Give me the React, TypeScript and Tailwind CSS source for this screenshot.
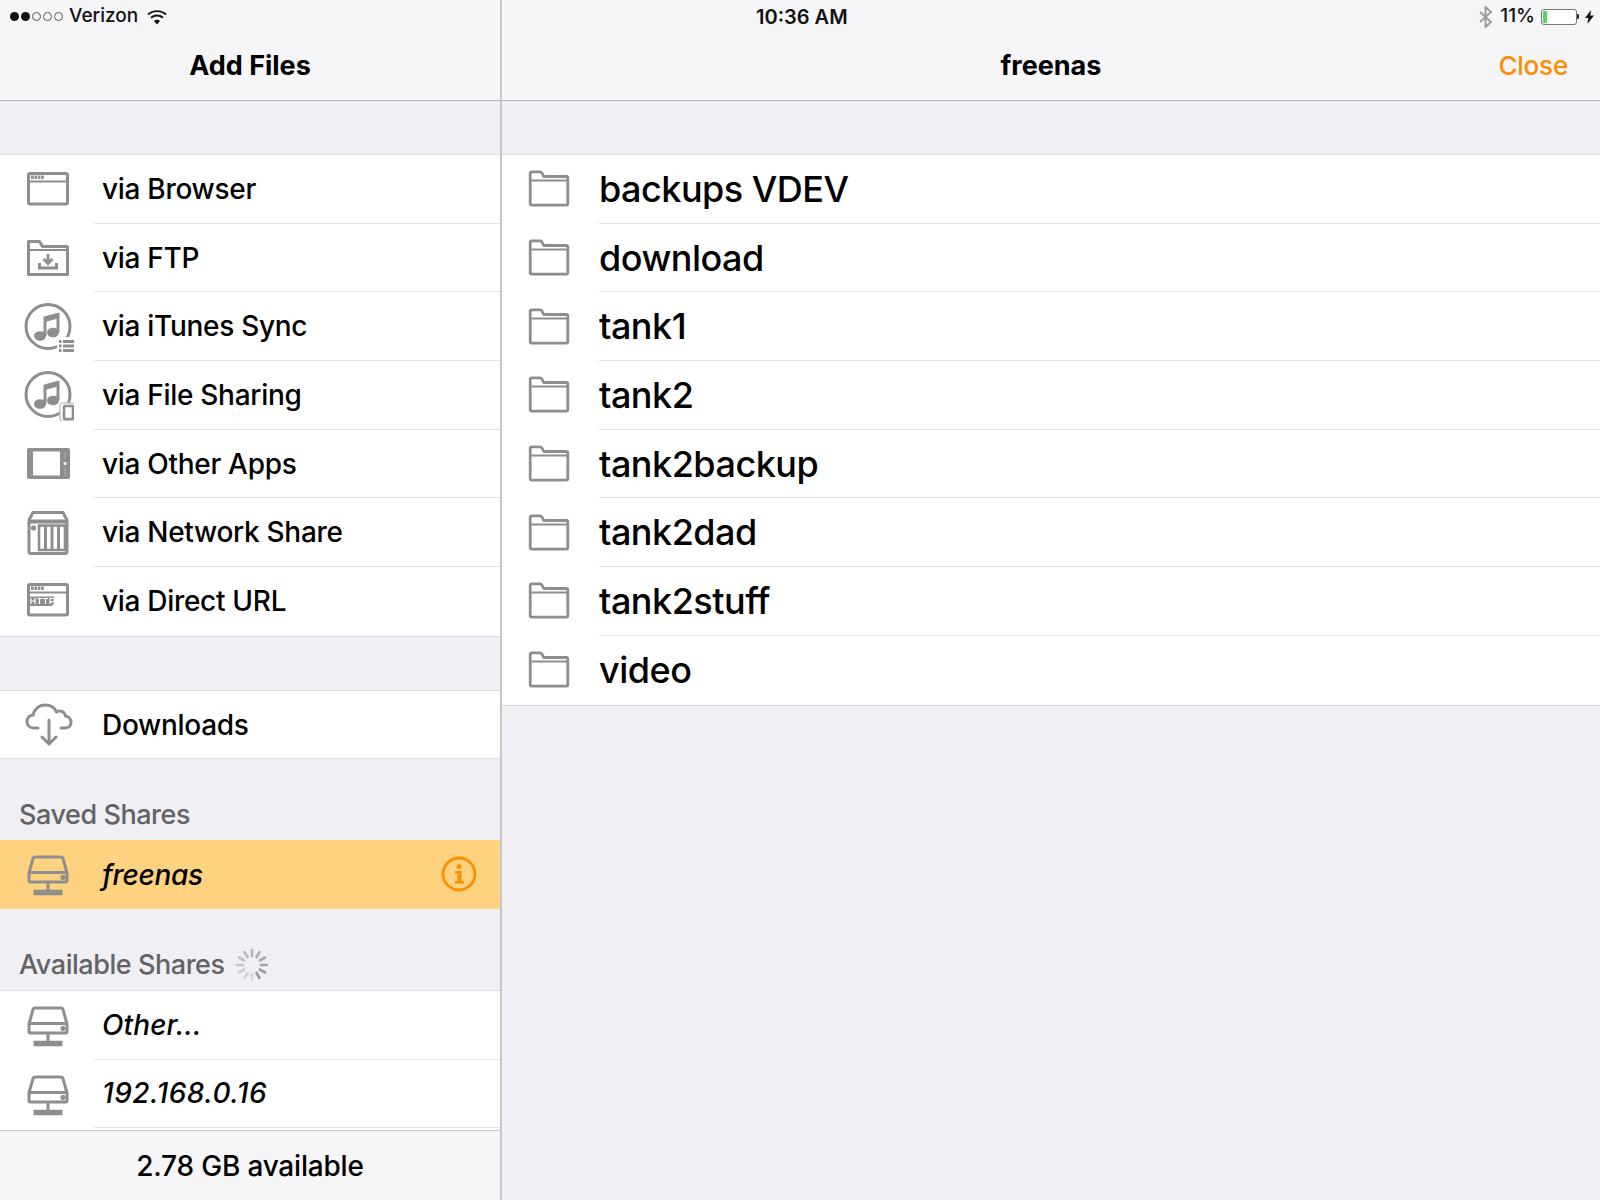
import React from "react";

const font = "font-['Inter','Liberation_Sans',sans-serif]";

const BrowserIcon = () => (
  <svg width="52" height="52" viewBox="0 0 52 52" fill="none" stroke="#8e8e8e" strokeWidth="3">
    <rect x="6.5" y="10.5" width="39" height="30.5" rx="1.5" />
    <path d="M6 18.5h40" strokeWidth="2.2" />
    <path d="M9 14.3h13" strokeWidth="3.4" strokeDasharray="2.6 .8" />
  </svg>
);

const FtpIcon = () => (
  <svg width="52" height="52" viewBox="0 0 52 52" fill="none" stroke="#8e8e8e" strokeWidth="3">
    <path d="M6.5 42.5V9.5h11l3 5h24a1 1 0 0 1 1 1v27H6.5z" strokeLinejoin="round" />
    <path d="M6 18h40" strokeWidth="2.2" />
    <path d="M26 22v9M21.5 27l4.5 4.5 4.5-4.5" strokeWidth="3" />
    <path d="M17.5 31v5h17v-5" strokeWidth="3" />
  </svg>
);

const Note = () => (
  <g>
    <path d="M23 35V17l13-3.5V31" fill="none" stroke="#8e8e8e" strokeWidth="3" />
    <ellipse cx="18" cy="35" rx="6" ry="4.8" fill="#8e8e8e" />
    <ellipse cx="31" cy="31.5" rx="6" ry="4.8" fill="#8e8e8e" />
    <path d="M23 15.5l13-3.5v5.5l-13 3.5z" fill="#8e8e8e" />
  </g>
);

const ItunesIcon = () => (
  <svg width="52" height="52" viewBox="0 0 52 52" fill="none">
    <circle cx="26" cy="25.5" r="22" stroke="#8e8e8e" strokeWidth="3" />
    <Note />
    <rect x="35" y="36" width="18" height="16" fill="#fff" />
    <path d="M41 40.5h12M41 45h12M41 49.5h12" stroke="#8e8e8e" strokeWidth="3" />
    <path d="M37 40.5h2.5M37 45h2.5M37 49.5h2.5" stroke="#8e8e8e" strokeWidth="3" />
  </svg>
);

const SharingIcon = () => (
  <svg width="52" height="52" viewBox="0 0 52 52" fill="none">
    <circle cx="26" cy="25.5" r="22" stroke="#8e8e8e" strokeWidth="3" />
    <Note />
    <rect x="38" y="34" width="15" height="18" rx="3" fill="#fff" stroke="#c4c4c4" strokeWidth="1.5" />
    <rect x="42" y="37" width="9" height="13" rx="1" fill="#fff" stroke="#8e8e8e" strokeWidth="2.6" />
  </svg>
);

const TabletIcon = () => (
  <svg width="52" height="52" viewBox="0 0 52 52" fill="none">
    <rect x="5" y="10" width="43" height="31" rx="2" fill="#8e8e8e" />
    <rect x="11" y="13.5" width="27" height="24" fill="#fff" />
    <circle cx="43" cy="25.5" r="1.5" fill="#fff" />
    <rect x="42.3" y="13.5" width="1.4" height="8" fill="#a5a5a5" />
    <rect x="42.3" y="29.5" width="1.4" height="8" fill="#a5a5a5" />
  </svg>
);

const NasIcon = () => (
  <svg width="52" height="52" viewBox="0 2 52 52" fill="none" stroke="#8e8e8e">
    <path d="M7 47V15l4-7.5h30l4 7.5v32a1.5 1.5 0 0 1-1.5 1.5h-35A1.5 1.5 0 0 1 7 47z" strokeWidth="3" />
    <path d="M6 16.5h40" strokeWidth="4" />
    <path d="M17 20.5h26v24.5H17z" strokeWidth="2.6" />
    <path d="M23.5 20v25M30 20v25M36.5 20v25" strokeWidth="3" />
    <circle cx="11.5" cy="23" r="2.2" fill="#8e8e8e" strokeWidth="1" />
  </svg>
);

const UrlIcon = () => (
  <svg width="52" height="52" viewBox="0 0 52 52" fill="none" stroke="#8e8e8e" strokeWidth="3">
    <rect x="6.5" y="9.5" width="39" height="30.5" rx="1.5" />
    <path d="M6 17.5h40" strokeWidth="2.2" />
    <path d="M9 13.3h13" strokeWidth="3.4" strokeDasharray="2.6 .8" />
    <path d="M6 21.5h26v7l-2 2.5H6" strokeWidth="0" fill="#8e8e8e" />
    <path d="M9 23v6M13 23v6M9 26h4M15 23.5h5M17.5 23.5V29M21 23.5h5M23.5 23.5V29M28 29v-5.5h2.6a1.6 1.6 0 0 1 0 3.4H28" stroke="#fff" strokeWidth="1.2" />
  </svg>
);

const CloudIcon = () => (
  <svg width="52" height="52" viewBox="-1 2 52 52" fill="none" stroke="#8e8e8e" strokeWidth="3" strokeLinecap="round">
    <path d="M15 32h-4.5C6.5 32 4 29 4 25.5c0-3.6 2.6-6.3 6.2-6.6C11 13.2 16 9 22.5 9c5 0 9 2.7 11 6.8 1-.5 2-.7 3-.7 3.2 0 5.4 2.2 6 5 3.3.5 5.5 3.2 5.5 6.2 0 3.5-2.6 5.7-6 5.7H38" />
    <path d="M26 24v24M19 41l7 7 7-7" strokeLinejoin="round" />
  </svg>
);

const DriveIcon = () => (
  <svg width="52" height="52" viewBox="0 0 52 52" fill="none" stroke="#8e8e8e">
    <path d="M7 25l4-14.5c.4-1 1-1.5 2-1.5h26c1 0 1.6.5 2 1.5l4 14.5v7.5a1.5 1.5 0 0 1-1.5 1.5h-35A1.5 1.5 0 0 1 7 32.5z" strokeWidth="3" />
    <path d="M6 24.5h40" strokeWidth="3" />
    <circle cx="41" cy="29.5" r="2.2" fill="#8e8e8e" strokeWidth="1" />
    <path d="M26 35v7" strokeWidth="3" />
    <path d="M11.5 44.5h29" strokeWidth="5.5" />
  </svg>
);

const FolderIcon = () => (
  <svg width="44" height="40" viewBox="0 1 44 40" fill="none" stroke="#8e8e8e" strokeWidth="2.8" strokeLinejoin="round">
    <path d="M3.2 35.5V5.5c0-1 .6-1.6 1.6-1.6h8.4c.8 0 1.2.4 1.6 1l2 3.6h22.4c1 0 1.6.6 1.6 1.6v25.4c0 1-.6 1.6-1.6 1.6H4.8c-1 0-1.6-.6-1.6-1.6z" />
    <path d="M3 12.5h37.8" strokeWidth="2" />
  </svg>
);

const Spinner = () => (
  <svg width="34" height="34" viewBox="-17 -17 34 34">
    {[...Array(12)].map((_, i) => (
      <line
        key={i}
        x1="0"
        y1="-9"
        x2="0"
        y2="-15"
        stroke="#8e8e93"
        strokeWidth="2.6"
        strokeLinecap="round"
        opacity={0.25 + (((i + 6) % 12) / 12) * 0.7}
        transform={`rotate(${i * 30})`}
      />
    ))}
  </svg>
);

const InfoIcon = () => (
  <svg width="36" height="36" viewBox="0 0 36 36" fill="none">
    <circle cx="18" cy="18" r="16" stroke="#ff8f00" strokeWidth="2.8" />
    <circle cx="18" cy="10.5" r="2.5" fill="#ff8f00" />
    <path d="M14 15h6.5v10h2.5v2.5h-9V25h2.5v-7.5H14z" fill="#ff8f00" />
  </svg>
);

const WifiIcon = () => (
  <svg width="20" height="16" viewBox="0 0 20 16" fill="none" stroke="#111" strokeWidth="1.9">
    <path d="M1 5.5C6 1 14 1 19 5.5" />
    <path d="M4 8.8c3.5-3 8.5-3 12 0" />
    <path d="M10 15.5l-3-3.6c1.8-1.4 4.2-1.4 6 0z" fill="#111" stroke="none" />
  </svg>
);

const BluetoothIcon = () => (
  <svg width="14" height="22" viewBox="0 0 14 22" fill="none" stroke="#9a9a9a" strokeWidth="1.9">
    <path d="M1 6l11 10-5.5 5V1L12 6 1 16" />
  </svg>
);

const Battery = () => (
  <div className="flex items-center">
    <div className="flex h-[16px] w-[36px] rounded-[3px] border border-[#777] bg-white p-[1px]">
      <div className="h-full w-[4px] rounded-[1px] bg-[#4cd964]" />
    </div>
    <div className="h-[5px] w-[2px] rounded-r-[1px] bg-[#333]" />
  </div>
);

const BoltIcon = () => (
  <svg width="9" height="14" viewBox="0 0 9 14">
    <path d="M6 0L0 8h3.4L2.4 14 9 5.6H5.2z" fill="#111" />
  </svg>
);

const topRows: [React.ReactNode, string][] = [
  [<BrowserIcon />, "via Browser"],
  [<FtpIcon />, "via FTP"],
  [<ItunesIcon />, "via iTunes Sync"],
  [<SharingIcon />, "via File Sharing"],
  [<TabletIcon />, "via Other Apps"],
  [<NasIcon />, "via Network Share"],
  [<UrlIcon />, "via Direct URL"],
];

const folders = ["backups VDEV", "download", "tank1", "tank2", "tank2backup", "tank2dad", "tank2stuff", "video"];

type RowProps = {
  icon: React.ReactNode;
  label: string;
  last?: boolean;
  italic?: boolean;
  short?: boolean;
  tracking?: string;
};

const MenuRow: React.FC<RowProps> = ({ icon, label, last, italic, short, tracking = "tracking-[-0.3px]" }) => (
  <div className={`flex bg-white ${short ? "h-[67px]" : "h-[68.7px]"}`}>
    <div className="flex w-[94px] items-center justify-center pl-[2px]">{icon}</div>
    <div
      className={`flex flex-1 items-center pl-2 text-[28px] font-medium text-black ${tracking} ${
        italic ? "italic" : ""
      } ${short ? "pt-[1px]" : ""} ${last ? "" : "border-b border-[#e2e2e5]"}`}
    >
      {label}
    </div>
  </div>
);

const App: React.FC = () => {
  return (
    <div className={`flex h-[1200px] w-[1600px] overflow-hidden bg-[#efeff4] ${font}`}>
      {/* left pane */}
      <div className="flex w-[502px] flex-col border-r-2 border-[#c8c8cc]">
        <div className="h-[101px] border-b border-[#b2b2b6] bg-[#f6f6f8]">
          <div className="flex h-[32px] items-center pl-[10px] pt-[1px] text-[19px] font-medium text-[#111]">
            <div className="flex gap-[2px]">
              <span className="h-[9px] w-[9px] rounded-full bg-[#111]" />
              <span className="h-[9px] w-[9px] rounded-full bg-[#111]" />
              <span className="h-[9px] w-[9px] rounded-full border border-[#555]" />
              <span className="h-[9px] w-[9px] rounded-full border border-[#555]" />
              <span className="h-[9px] w-[9px] rounded-full border border-[#555]" />
            </div>
            <span className="ml-[6px]">Verizon</span>
            <span className="ml-[9px]">
              <WifiIcon />
            </span>
          </div>
          <div className="flex h-[68px] items-center justify-center text-[27px] font-bold text-black">
            Add Files
          </div>
        </div>

        <div className="h-[54px] border-b border-[#dedee2]" />
        {topRows.map(([icon, label], i) => (
          <MenuRow key={label} icon={icon} label={label} last={i === topRows.length - 1} />
        ))}

        <div className="h-[55px] border-y border-[#dadade]" />
        <MenuRow icon={<CloudIcon />} label="Downloads" last short />

        <div className="flex h-[82px] items-end border-t border-[#e2e2e5] pb-[4px] pl-[19px] text-[27px] font-medium tracking-[-0.45px] text-[#636366]">
          Saved Shares
        </div>
        <div className="flex h-[69px] items-center bg-[#ffd27f]">
          <div className="flex w-[94px] items-center justify-center pl-[2px]">
            <DriveIcon />
          </div>
          <div className="flex-1 pl-2 pt-[1px] text-[28px] font-medium italic tracking-[-0.3px] text-black">freenas</div>
          <div className="pr-[23px]">
            <InfoIcon />
          </div>
        </div>

        <div className="flex h-[82px] items-end gap-[10px] border-b border-[#dedee2] pl-[19px] text-[27px] font-medium tracking-[-0.45px] text-[#636366]">
          <span className="pb-[4px]">Available Shares</span>
          <span className="pb-[8px]">
            <Spinner />
          </span>
        </div>
        <MenuRow icon={<DriveIcon />} label="Other..." italic tracking="tracking-[0.1px]" />
        <MenuRow icon={<DriveIcon />} label="192.168.0.16" italic tracking="tracking-[0.5px]" />
        <div className="h-[2px] bg-white" />

        <div className="flex flex-1 items-center justify-center border-t border-[#c8c8cc] bg-[#f6f6f8] text-[28px] font-medium tracking-[-0.2px] text-black">
          2.78 GB available
        </div>
      </div>

      {/* right pane */}
      <div className="flex flex-1 flex-col">
        <div className="h-[101px] border-b border-[#b2b2b6] bg-[#f6f6f8]">
          <div className="flex h-[32px] items-center pl-[254px] pr-[6px] pt-[1px] text-[19px] font-medium text-[#111]">
            <span className="text-[20px] font-semibold">10:36 AM</span>
            <div className="ml-auto flex items-center gap-[6px]">
              <span className="mr-[1px]">
                <BluetoothIcon />
              </span>
              <span>11%</span>
              <Battery />
              <BoltIcon />
            </div>
          </div>
          <div className="relative flex h-[68px] items-center justify-center text-[27px] font-bold text-black">
            freenas
            <span className="absolute right-[32px] mb-[2px] text-[26px] font-medium tracking-[-0.2px] text-[#ff8b00]">Close</span>
          </div>
        </div>

        <div className="h-[54px] border-b border-[#dedee2]" />
        {folders.map((name, i) => (
          <div key={name} className="flex h-[68.7px] bg-white">
            <div className="flex w-[97px] items-center justify-center pr-[3px]">
              <FolderIcon />
            </div>
            <div
              className={`flex flex-1 items-center text-[36px] font-medium tracking-[-0.5px] text-black ${
                i === folders.length - 1 ? "" : "border-b border-[#e2e2e5]"
              }`}
            >
              {name}
            </div>
          </div>
        ))}
        <div className="border-t border-[#d8d8dc]" />
      </div>
    </div>
  );
};

export default App;
